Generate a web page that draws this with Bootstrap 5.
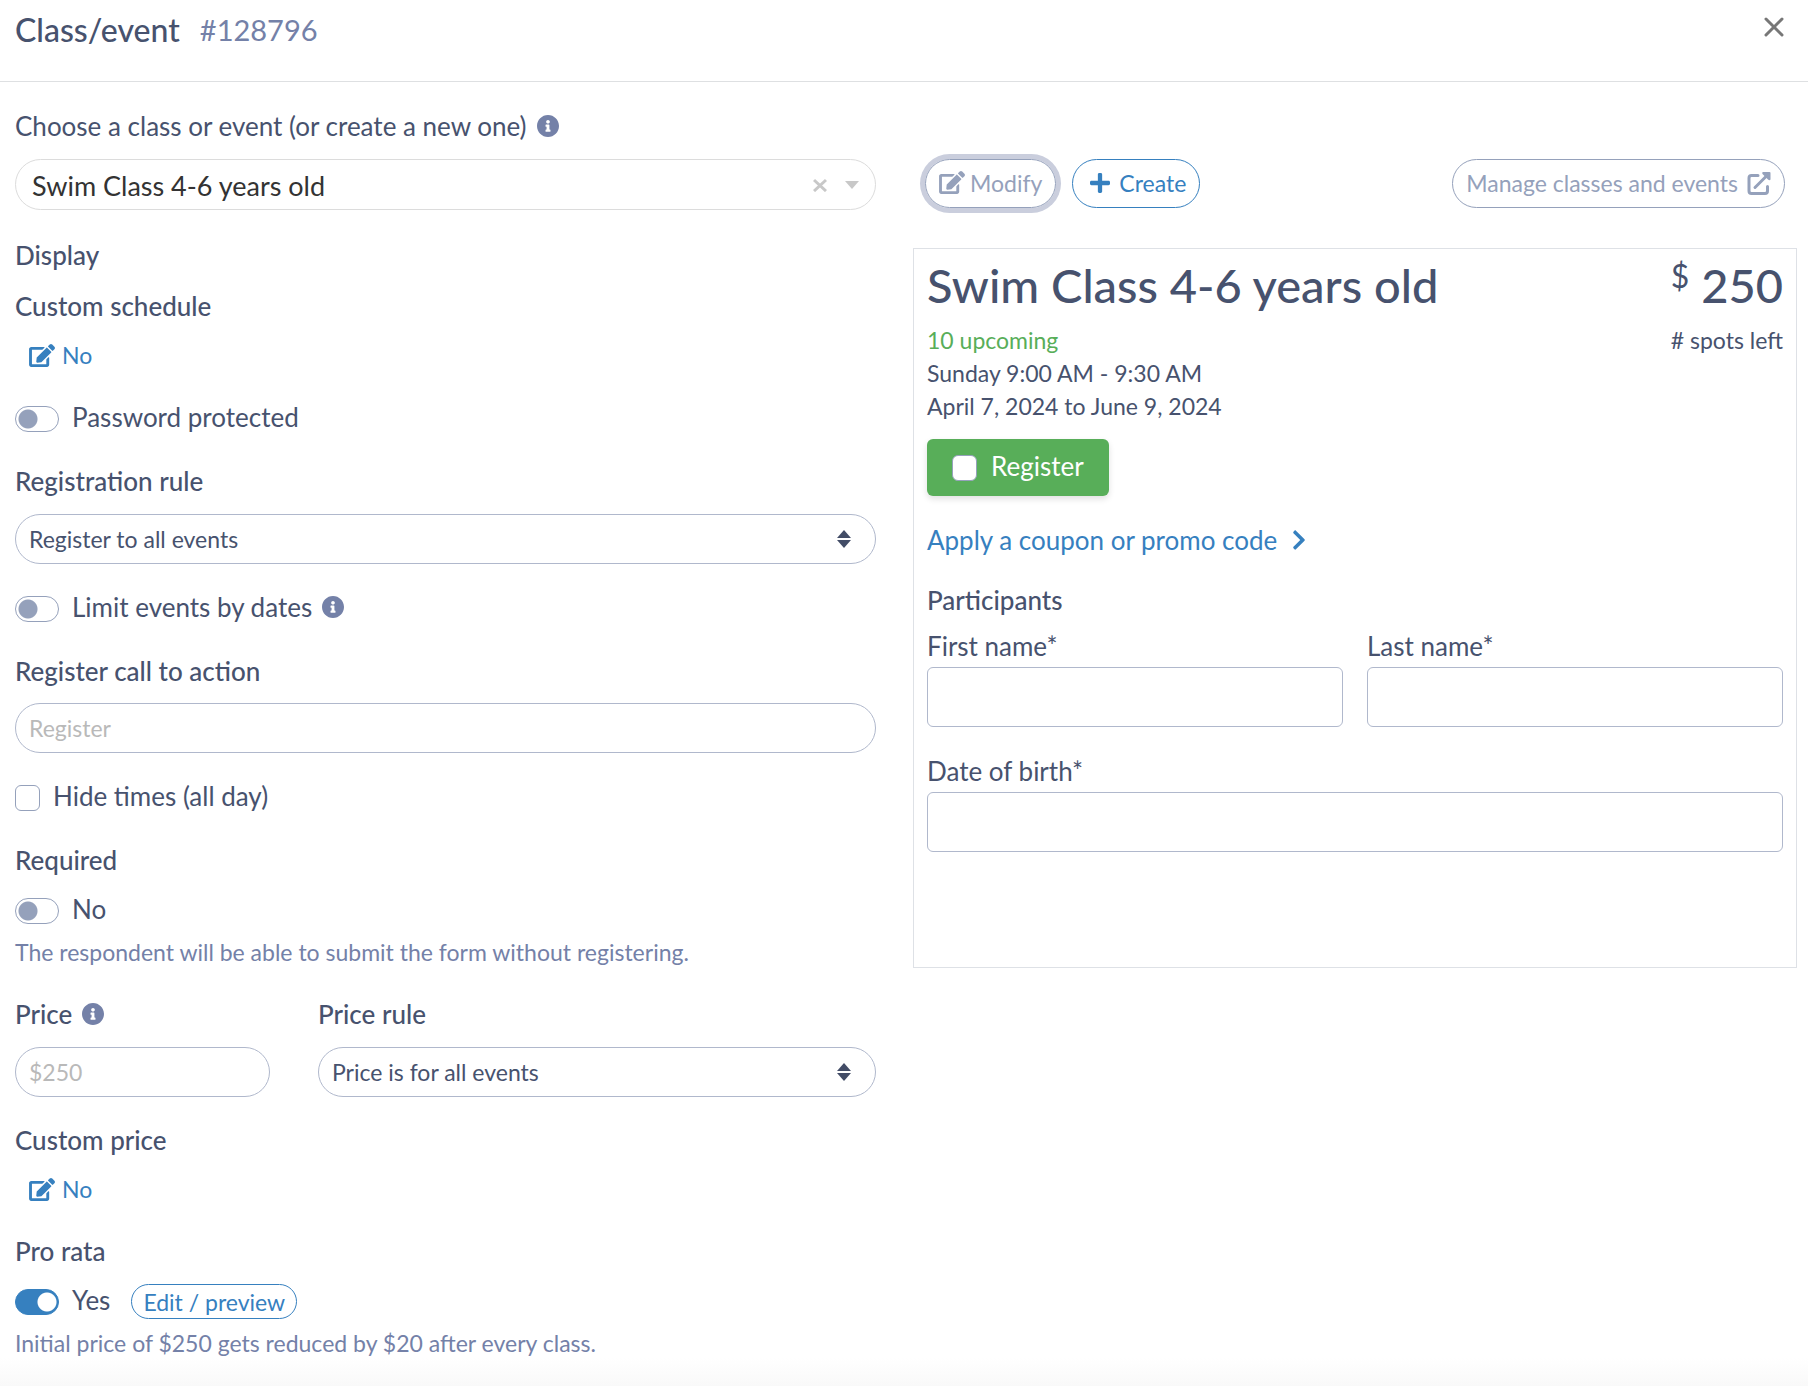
<!DOCTYPE html>
<html lang="en">
<head>
<meta charset="utf-8">
<meta name="viewport" content="width=device-width, initial-scale=1">
<title>Class/event #128796</title>
<link href="https://cdn.jsdelivr.net/npm/bootstrap@5.3.0/dist/css/bootstrap.min.css" rel="stylesheet">
<style>
  :root { --ink: #47526e; --soft: #7481a8; --line: #b0b8cc; --muted: #95a1bb; --link: #3680bf; --leaf: #58ae59; }
  body { font-family: Lato, "Liberation Sans", sans-serif; font-size: 26px; line-height: 38px; color: var(--ink); background: #fff; }
  a { color: var(--link); }
  svg { flex: none; fill: currentColor; }
  .page { min-height: 100vh; background: linear-gradient(to top, #f9f9f9, #fff 28px); }
  .top-bar { padding: 11px 24px 32px 15px; border-bottom: 1px solid #dee0e2; }
  .top-bar h1 { font-size: 32px; line-height: 38px; font-weight: 500; }
  .event-id { font-size: 29px; line-height: 38px; color: var(--soft); }
  .close-btn { padding: 0 0 6px; border: 0; background: none; color: #777; line-height: 1; }
  .settings { padding: 25px 28px 20px 15px; }
  .preview { padding: 77px 11px 24px 9px; }
  .group { margin-bottom: 26px; }
  .group-control { margin-bottom: 24px; }
  .caption { display: block; margin: 0 0 13px; font-size: 26px; line-height: 38px; font-weight: 500; }
  .caption-plain { font-weight: 400; }
  .caption-tall { margin-bottom: 14px; }
  .caption-tight { margin-bottom: 11px; }
  .hint { margin-top: 7px; font-size: 23px; line-height: 34px; color: var(--soft); }
  .info { margin-left: 10px; color: var(--soft); }
  .pill { height: 50px; padding: 0 13px; border: 1px solid var(--line); border-radius: 26px; font-size: 23px; color: var(--ink); }
  .pill::placeholder { color: #b9b9b9; }
  select.pill { background: #fff url("data:image/svg+xml,%3Csvg xmlns='http://www.w3.org/2000/svg' viewBox='0 0 14 18'%3E%3Cpath fill='%23424c66' d='M7 0l7 8H0zM0 10h14l-7 8z'/%3E%3C/svg%3E") no-repeat right 24px center / 14px 18px; }
  select.picker { height: 51px; padding: 3px 90px 0 16px; border-color: #dcdcdc; background-image: none; font-size: 27px; color: #333; }
  .picker-tools { position: absolute; top: 0; right: 17px; height: 51px; gap: 18px; color: #c8c8c8; }
  .picker-tools button { padding: 0; border: 0; background: none; color: inherit; line-height: 1; }
  .edit-link { padding-left: 14px; gap: 7px; font-size: 23px; line-height: 34px; text-decoration: none; }
  .toggle-row { gap: 13px; min-height: 38px; }
  .form-check-input.toggle { flex: none; width: 44px; height: 26px; margin: 3px 0 0; border: 1px solid var(--muted); border-radius: 13px; background: #fff radial-gradient(circle at 12px 12px, var(--muted) 9px, transparent 10px); }
  .form-check-input.toggle:checked { border-color: var(--link); background: var(--link) radial-gradient(circle at 31px 12px, #fff 9px, transparent 10px); }
  .form-check-input.tick { flex: none; width: 25px; height: 26px; margin: 3px 0 0; border: 1px solid var(--muted); border-radius: 6px; background-color: #fff; }
  .price-grid { display: grid; grid-template-columns: 255fr 558fr; gap: 48px; }
  .btn-pill { display: inline-flex; align-items: center; height: 49px; padding: 0 13px; border: 1px solid; border-radius: 25px; font-size: 23px; line-height: 34px; }
  .btn-soft, .btn-soft:hover { color: var(--muted); border-color: var(--muted); }
  .btn-blue, .btn-blue:hover { color: var(--link); border-color: var(--link); }
  .is-focused { box-shadow: 0 0 0 5px #cacedd; }
  .btn-icon { gap: 9px; padding-bottom: 2px; }
  .btn-icon.btn-tight { gap: 5px; }
  .btn-pill.btn-small { height: 35px; margin-top: 3px; padding: 0 11px; }
  .preview-box { margin-top: 40px; padding: 9px 13px 115px; border: 1px solid #dee1e6; }
  .preview-title { font-size: 47px; line-height: 54px; font-weight: 500; }
  .preview-title sup { top: -15px; font-size: 32px; line-height: 30px; font-weight: 400; vertical-align: baseline; }
  .preview-facts { margin-top: 12px; font-size: 23px; line-height: 33px; }
  .leaf { color: var(--leaf); }
  .register { gap: 14px; height: 57px; margin-top: 16px; padding: 0 25px 3px; border-radius: 6px; background: var(--leaf); color: #fff; box-shadow: 0 3px 6px rgba(0, 0, 0, .12); }
  .coupon { gap: 16px; margin-top: 25px; text-decoration: none; }
  .participants { margin: 22px 0 8px; font-size: 26px; line-height: 38px; font-weight: 500; }
  .form-control.box { height: 60px; border: 1px solid var(--line); border-radius: 6px; font-size: 23px; }
  .field-label { display: block; margin-bottom: 2px; }
  .names { display: grid; grid-template-columns: 1fr 1fr; gap: 24px; margin-bottom: 25px; }
</style>
</head>
<body>
<svg class="d-none" xmlns="http://www.w3.org/2000/svg">
  <symbol id="edit" viewBox="0 0 576 512"><path d="M402.6 83.2l90.2 90.2c3.8 3.8 3.8 10 0 13.8L274.4 405.6l-92.8 10.3c-12.4 1.4-22.9-9.1-21.5-21.5l10.3-92.8L388.8 83.2c3.8-3.8 10-3.8 13.8 0zm162-22.9l-48.8-48.8c-15.2-15.2-39.9-15.2-55.2 0l-35.4 35.4c-3.8 3.8-3.8 10 0 13.8l90.2 90.2c3.8 3.8 10 3.8 13.8 0l35.4-35.4c15.2-15.3 15.2-40 0-55.2zM384 346.2V448H64V128h229.8c3.2 0 6.2-1.3 8.5-3.5l40-40c7.6-7.6 2.2-20.5-8.5-20.5H48C21.5 64 0 85.5 0 112v352c0 26.5 21.5 48 48 48h352c26.5 0 48-21.5 48-48V306.2c0-10.7-12.9-16-20.5-8.5l-40 40c-2.2 2.3-3.5 5.3-3.5 8.5z"/></symbol>
  <symbol id="info" viewBox="8 8 496 496"><path d="M256 8C119 8 8 119 8 256s111 248 248 248 248-111 248-248S393 8 256 8zm0 110c23.200 0 42 18.800 42 42s-18.800 42-42 42-42-18.800-42-42 18.800-42 42-42zm56 254c0 6.600-5.400 12-12 12h-88c-6.600 0-12-5.400-12-12v-24c0-6.600 5.400-12 12-12h12v-64h-12c-6.600 0-12-5.400-12-12v-24c0-6.600 5.400-12 12-12h64c6.600 0 12 5.400 12 12v100h12c6.600 0 12 5.400 12 12v24z"/></symbol>
  <symbol id="plus" viewBox="0 32 448 448"><path d="M416 208H272V64c0-17.700-14.300-32-32-32h-32c-17.700 0-32 14.300-32 32v144H32c-17.700 0-32 14.300-32 32v32c0 17.700 14.300 32 32 32h144v144c0 17.700 14.300 32 32 32h32c17.700 0 32-14.300 32-32V304h144c17.700 0 32-14.300 32-32v-32c0-17.700-14.300-32-32-32z"/></symbol>
  <symbol id="external" viewBox="0 0 24 24"><path d="M11 4.500H4.500Q2 4.500 2 7V20q0 2.500 2.500 2.500H18q2.500 0 2.500-2.500v-4.500M8 16.500L19 5.500" fill="none" stroke="currentColor" stroke-width="3" stroke-linecap="round"/><path d="M16 1H22.500q1 0 1 1V8.500q-1 1.500-2.500 0l-5.500-5.500q-1-1.500.5-2z"/></symbol>
  <symbol id="cross" viewBox="0 0 20 20"><path d="M2 2l16 16M18 2L2 18" fill="none" stroke="currentColor" stroke-width="3" stroke-linecap="round"/></symbol>
  <symbol id="clear" viewBox="0 0 14 14"><path d="M1 2l12 11M13 2L1 13" fill="none" stroke="currentColor" stroke-width="3"/></symbol>
  <symbol id="chevron" viewBox="24 36 272 440"><path d="M285.500 273L91 467.300c-9.400 9.400-24.600 9.400-34 0l-22.500-22.700c-9.400-9.400-9.400-24.500 0-33.900L188.500 256 34.500 101.300c-9.400-9.400-9.400-24.600 0-34L57 44.700c9.400-9.400 24.600-9.400 34 0L285.500 239c9.400 9.400 9.400 24.600 0 34z"/></symbol>
</svg>

<div class="page">
  <header class="top-bar d-flex align-items-center justify-content-between">
    <div class="d-flex align-items-center">
      <h1 class="m-0 me-3">Class/event</h1>
      <span class="event-id ms-1">#128796</span>
    </div>
    <button class="close-btn d-flex" type="button" aria-label="Close"><svg width="20" height="20"><use href="#cross"/></svg></button>
  </header>

  <main class="row g-0">
    <section class="col-6 settings">
      <div class="group">
        <div class="caption caption-tall d-flex align-items-center">
          <label class="caption-plain" for="event">Choose a class or event (or create a new one)</label>
          <svg class="info" width="22" height="22"><use href="#info"/></svg>
        </div>
        <div class="position-relative">
          <select class="form-select pill picker" id="event"><option>Swim Class 4-6 years old</option></select>
          <div class="picker-tools d-flex align-items-center">
            <button class="d-flex" type="button" aria-label="Clear"><svg width="14" height="14"><use href="#clear"/></svg></button>
            <svg width="14" height="8" viewBox="0 0 14 8"><path d="M0 0h14L7 8z"/></svg>
          </div>
        </div>
      </div>

      <h2 class="caption">Display</h2>

      <div class="group">
        <div class="caption">Custom schedule</div>
        <a class="edit-link d-flex align-items-center" href="#"><svg width="26" height="23"><use href="#edit"/></svg>No</a>
      </div>

      <div class="group toggle-row d-flex align-items-center">
        <input class="form-check-input toggle" type="checkbox" role="switch" id="password">
        <label for="password">Password protected</label>
      </div>

      <div class="group-control">
        <label class="caption caption-tall" for="rule">Registration rule</label>
        <select class="form-select pill" id="rule"><option>Register to all events</option></select>
      </div>

      <div class="group toggle-row d-flex align-items-center">
        <input class="form-check-input toggle" type="checkbox" role="switch" id="limit">
        <label class="d-flex align-items-center" for="limit">Limit events by dates<svg class="info" width="22" height="22"><use href="#info"/></svg></label>
      </div>

      <div class="group-control">
        <label class="caption" for="cta">Register call to action</label>
        <input class="form-control pill" id="cta" type="text" placeholder="Register">
      </div>

      <div class="group toggle-row d-flex align-items-center">
        <input class="form-check-input tick" type="checkbox" id="allday">
        <label for="allday">Hide times (all day)</label>
      </div>

      <div class="group">
        <div class="caption caption-tight">Required</div>
        <div class="toggle-row d-flex align-items-center">
          <input class="form-check-input toggle" type="checkbox" role="switch" id="required">
          <label for="required">No</label>
        </div>
        <div class="hint">The respondent will be able to submit the form without registering.</div>
      </div>

      <div class="price-grid group-control">
        <div>
          <div class="caption caption-tall d-flex align-items-center">
            <label for="price">Price</label>
            <svg class="info" width="22" height="22"><use href="#info"/></svg>
          </div>
          <input class="form-control pill" id="price" type="text" placeholder="$250">
        </div>
        <div>
          <label class="caption caption-tall" for="price-rule">Price rule</label>
          <select class="form-select pill" id="price-rule"><option>Price is for all events</option></select>
        </div>
      </div>

      <div class="group">
        <div class="caption">Custom price</div>
        <a class="edit-link d-flex align-items-center" href="#"><svg width="26" height="23"><use href="#edit"/></svg>No</a>
      </div>

      <div>
        <div class="caption caption-tight">Pro rata</div>
        <div class="toggle-row d-flex align-items-center">
          <input class="form-check-input toggle" type="checkbox" role="switch" id="prorata" checked>
          <label for="prorata">Yes</label>
          <button class="btn btn-pill btn-small btn-blue ms-2" type="button">Edit / preview</button>
        </div>
        <div class="hint">Initial price of $250 gets reduced by $20 after every class.</div>
      </div>
    </section>

    <section class="col-6 preview">
      <div class="d-flex justify-content-between px-2">
        <div class="d-flex gap-3 ps-1">
          <button class="btn btn-pill btn-icon btn-tight btn-soft is-focused" type="button"><svg width="26" height="23"><use href="#edit"/></svg>Modify</button>
          <button class="btn btn-pill btn-icon btn-blue" type="button"><svg class="ms-1" width="20" height="20"><use href="#plus"/></svg>Create</button>
        </div>
        <a class="btn btn-pill btn-icon btn-soft me-1" href="#">Manage classes and events<svg width="24" height="24"><use href="#external"/></svg></a>
      </div>

      <div class="preview-box">
        <div class="d-flex justify-content-between">
          <h2 class="preview-title m-0">Swim Class 4-6 years old</h2>
          <div class="preview-title"><sup>$</sup> 250</div>
        </div>
        <div class="preview-facts d-flex justify-content-between">
          <div>
            <div class="leaf">10 upcoming</div>
            <div>Sunday 9:00 AM - 9:30 AM</div>
            <div>April 7, 2024 to June 9, 2024</div>
          </div>
          <div># spots left</div>
        </div>
        <label class="register d-inline-flex align-items-center" for="register">
          <input class="form-check-input tick" type="checkbox" id="register">Register
        </label>
        <div><a class="coupon d-inline-flex align-items-center" href="#">Apply a coupon or promo code<svg width="12" height="20"><use href="#chevron"/></svg></a></div>

        <h3 class="participants">Participants</h3>
        <div class="names">
          <div>
            <label class="field-label" for="first">First name*</label>
            <input class="form-control box" id="first" type="text">
          </div>
          <div>
            <label class="field-label" for="last">Last name*</label>
            <input class="form-control box" id="last" type="text">
          </div>
        </div>
        <label class="field-label" for="dob">Date of birth*</label>
        <input class="form-control box" id="dob" type="text">
      </div>
    </section>
  </main>
</div>
<script src="https://cdn.jsdelivr.net/npm/bootstrap@5.3.0/dist/js/bootstrap.bundle.min.js"></script>
</body>
</html>
